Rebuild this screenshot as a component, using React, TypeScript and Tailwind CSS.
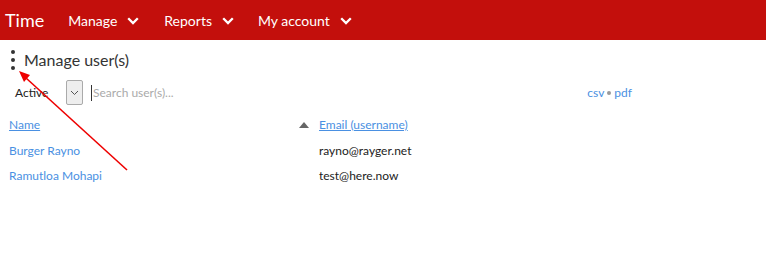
import React from "react";

const Chevron = () => (
  <svg width="12" height="8" viewBox="0 0 12 8" className="ml-[10px] mt-[1px]">
    <path d="M1.2 1.2 L6 6 L10.8 1.2" fill="none" stroke="white" strokeWidth="2.3" />
  </svg>
);

export default function App() {
  return (
    <div className="relative w-[766px] h-[253px] bg-white overflow-hidden" style={{ fontFamily: "Lato, 'Open Sans', sans-serif" }}>
      <header className="h-[40px] bg-[#c30f0c] flex items-center text-white">
        <span className="ml-[5px] text-[18px] leading-none">Time</span>
        <div className="ml-[24px] flex items-center text-[14px]">
          <span>Manage</span>
          <Chevron />
        </div>
        <div className="ml-[25px] flex items-center text-[14px]">
          <span>Reports</span>
          <Chevron />
        </div>
        <div className="ml-[24px] flex items-center text-[14px]">
          <span>My account</span>
          <Chevron />
        </div>
      </header>

      <div className="flex items-center mt-[10px] h-[20px]">
        <div className="ml-[11px] flex flex-col gap-[4px] w-[4px]">
          <span className="w-[4px] h-[4px] rounded-full bg-[#333]" />
          <span className="w-[4px] h-[4px] rounded-full bg-[#333]" />
          <span className="w-[4px] h-[4px] rounded-full bg-[#333]" />
        </div>
        <span className="ml-[9px] text-[16px] text-[#333]">Manage user(s)</span>
      </div>

      <div className="flex items-center mt-[10px] h-[25px]">
        <span className="ml-[15px] text-[12px] text-[#222] w-[51px]">Active</span>
        <div className="w-[17px] h-[25px] border border-[#aaa] bg-[#eee] rounded-[2px] flex items-center justify-center">
          <svg width="9" height="6" viewBox="0 0 9 6">
            <path d="M1 1 L4.5 4.5 L8 1" fill="none" stroke="#555" strokeWidth="1" />
          </svg>
        </div>
        <div className="ml-[8px] w-[1px] h-[16px] bg-[#333]" />
        <span className="ml-[1px] text-[12px] text-[#aaa]">Search user(s)...</span>
        <span className="ml-auto mr-[134px] text-[12px] text-[#4a90e2] flex items-center">
          csv
          <span className="mx-[3px] w-[4px] h-[4px] rounded-full bg-[#999] inline-block" />
          pdf
        </span>
      </div>

      <div className="flex items-center mt-[11px] h-[18px] text-[12px]">
        <span className="ml-[9px] w-[290px] text-[#4a90e2] underline">Name</span>
        <svg width="10" height="6" viewBox="0 0 10 6" className="mr-[10px]">
          <path d="M0 6 L5 0 L10 6 Z" fill="#666" />
        </svg>
        <span className="text-[#4a90e2] underline">Email (username)</span>
      </div>

      <div className="flex items-center mt-[8px] h-[18px] text-[12px]">
        <span className="ml-[9px] w-[310px] text-[#4a90e2]">Burger Rayno</span>
        <span className="text-[#222]">rayno@rayger.net</span>
      </div>
      <div className="flex items-center mt-[7px] h-[18px] text-[12px]">
        <span className="ml-[9px] w-[310px] text-[#4a90e2]">Ramutloa Mohapi</span>
        <span className="text-[#222]">test@here.now</span>
      </div>

      <svg className="absolute left-0 top-0 pointer-events-none" width="766" height="253">
        <line x1="127" y1="170" x2="26" y2="78" stroke="#ee0000" strokeWidth="1.6" />
        <path d="M19 71 L30 75 L24 82 Z" fill="#ee0000" />
      </svg>
    </div>
  );
}
